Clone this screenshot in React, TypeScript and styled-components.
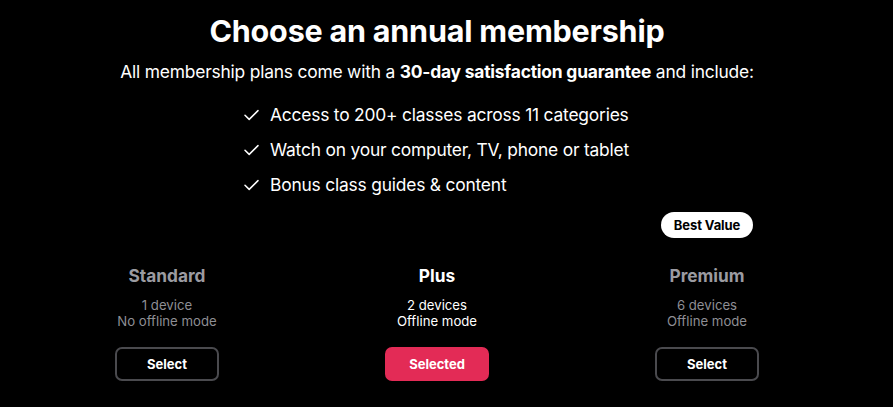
import React from "react";
import styled, { createGlobalStyle } from "styled-components";

interface Plan {
  name: string;
  devices: string;
  offline: string;
  selected?: boolean;
  badge?: string;
}

const plans: Plan[] = [
  { name: "Standard", devices: "1 device", offline: "No offline mode" },
  { name: "Plus", devices: "2 devices", offline: "Offline mode", selected: true },
  { name: "Premium", devices: "6 devices", offline: "Offline mode", badge: "Best Value" },
];

const features = [
  "Access to 200+ classes across 11 categories",
  "Watch on your computer, TV, phone or tablet",
  "Bonus class guides & content",
];

function Check() {
  return (
    <svg width="15" height="12" viewBox="0 0 15 12" fill="none">
      <path d="M1 6.2 L5.2 10.4 L14 1.6" stroke="#fff" strokeWidth="1.5" strokeLinecap="round" strokeLinejoin="round" />
    </svg>
  );
}

function App(): JSX.Element {
  return (
    <>
      <GlobalStyle />
      <Page>
        <Title>Choose an annual membership</Title>
        <Subtitle>
          All membership plans come with a <b>30-day satisfaction guarantee</b> and include:
        </Subtitle>
        <FeatureList>
          {features.map((f) => (
            <Feature key={f}>
              <Check />
              <span>{f}</span>
            </Feature>
          ))}
        </FeatureList>
        <Plans>
          {plans.map((p) => (
            <PlanCol key={p.name}>
              <BadgeSlot>{p.badge && <Badge>{p.badge}</Badge>}</BadgeSlot>
              <PlanName active={p.selected}>{p.name}</PlanName>
              <PlanInfo active={p.selected}>
                <div>{p.devices}</div>
                <div>{p.offline}</div>
              </PlanInfo>
              <PlanButton active={p.selected}>{p.selected ? "Selected" : "Select"}</PlanButton>
            </PlanCol>
          ))}
        </Plans>
      </Page>
    </>
  );
}

const GlobalStyle = createGlobalStyle`
  html, body {
    margin: 0;
    background: #000;
  }
  body {
    font-family: Inter, "Liberation Sans", sans-serif;
    color: #fff;
  }
`;

const Page = styled.main`
  width: 874px;
  height: 407px;
  box-sizing: border-box;
  padding-top: 12px;
  display: flex;
  flex-direction: column;
  align-items: center;
`;

const Title = styled.h1`
  margin: 0;
  font-size: 30.5px;
  font-weight: 700;
  line-height: 38px;
  letter-spacing: -0.2px;
`;

const Subtitle = styled.p`
  margin: 11px 0 0;
  font-size: 17.4px;
  line-height: 22px;
  letter-spacing: -0.2px;
  b {
    font-weight: 700;
  }
`;

const FeatureList = styled.ul`
  list-style: none;
  margin: 20px 0 0;
  padding: 0 0 0 9px;
  align-self: center;
  display: flex;
  flex-direction: column;
  gap: 11px;
  width: 395px;
`;

const Feature = styled.li`
  display: flex;
  align-items: center;
  gap: 11px;
  font-size: 17.4px;
  line-height: 24px;
  letter-spacing: -0.2px;
`;

const Plans = styled.section`
  margin-top: 15px;
  display: grid;
  grid-template-columns: repeat(3, 270px);
`;

const PlanCol = styled.div`
  display: flex;
  flex-direction: column;
  align-items: center;
`;

const BadgeSlot = styled.div`
  height: 26px;
  display: flex;
  justify-content: center;
`;

const Badge = styled.span`
  background: #fff;
  color: #000;
  border-radius: 13px;
  padding: 0 13px;
  height: 26px;
  line-height: 26px;
  font-size: 13px;
  font-weight: 700;
  letter-spacing: -0.1px;
`;

const PlanName = styled.h2<{ active?: boolean }>`
  margin: 27px 0 0;
  font-size: 17.3px;
  line-height: 22px;
  font-weight: 700;
  color: ${(p) => (p.active ? "#fff" : "#9b9ba1")};
`;

const PlanInfo = styled.div<{ active?: boolean }>`
  margin-top: 10px;
  font-size: 13.2px;
  line-height: 16px;
  text-align: center;
  color: ${(p) => (p.active ? "#fff" : "#8e8e94")};
`;

const PlanButton = styled.button<{ active?: boolean }>`
  margin-top: 18px;
  width: 104px;
  height: 34px;
  box-sizing: border-box;
  border-radius: 7px;
  border: 2px solid ${(p) => (p.active ? "#e32b56" : "#4a4a4e")};
  background: ${(p) => (p.active ? "#e32b56" : "transparent")};
  color: #fff;
  font-family: Inter, "Liberation Sans", sans-serif;
  font-size: 13px;
  font-weight: 700;
  cursor: pointer;
`;

export default App;
